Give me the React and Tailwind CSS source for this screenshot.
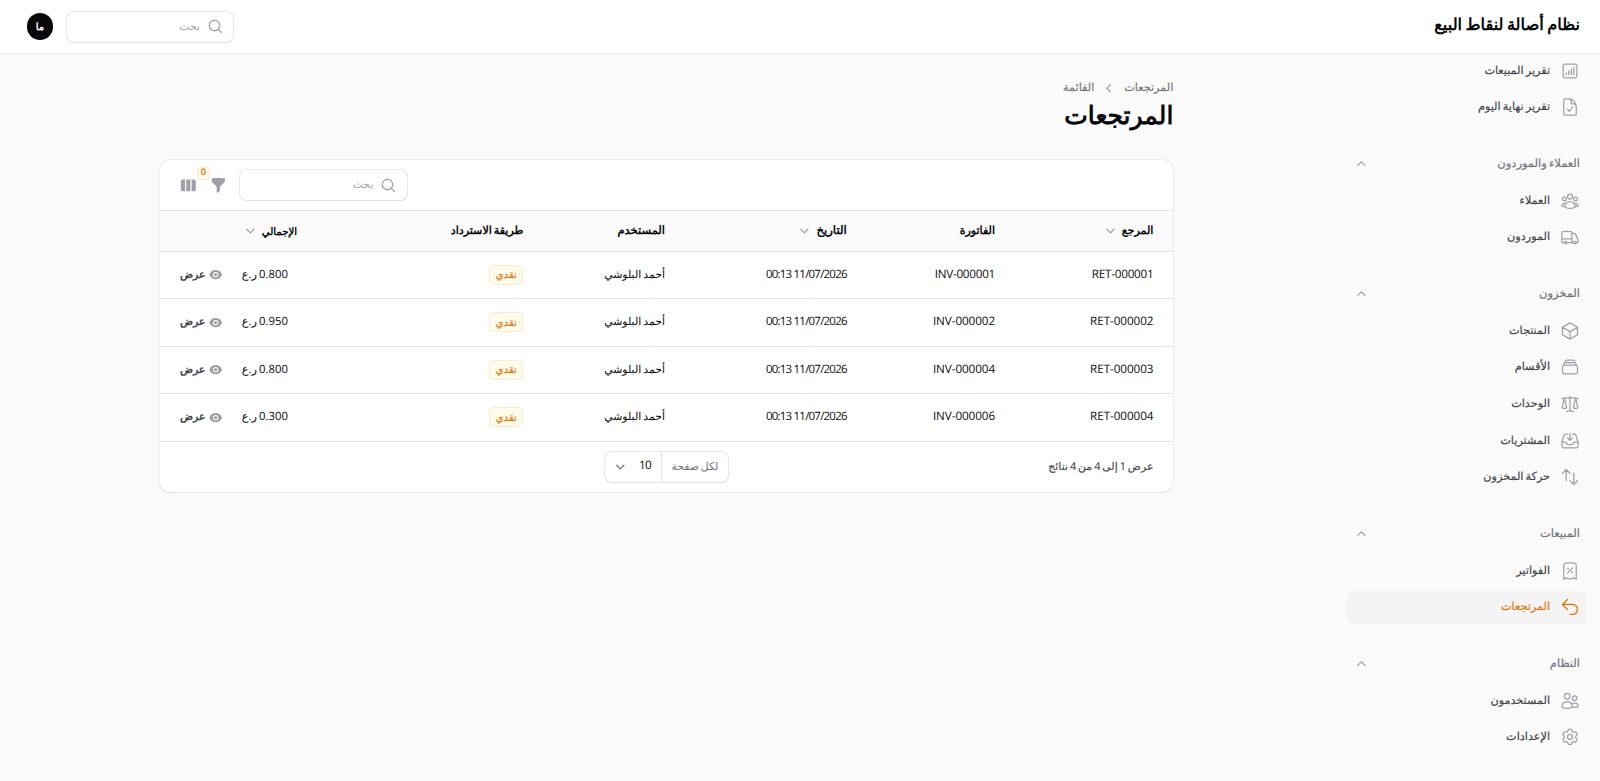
import {
  HiOutlineArrowsUpDown,
  HiOutlineArrowUturnLeft,
  HiOutlineChartBarSquare,
  HiOutlineCog6Tooth,
  HiOutlineCube,
  HiOutlineDocumentCheck,
  HiOutlineInboxArrowDown,
  HiOutlineReceiptPercent,
  HiOutlineRectangleStack,
  HiOutlineScale,
  HiOutlineTruck,
  HiOutlineUserGroup,
  HiOutlineUsers,
  HiMiniChevronDown,
  HiMiniChevronLeft,
  HiMiniChevronUp,
  HiMiniEye,
  HiMiniFunnel,
  HiMiniMagnifyingGlass,
  HiMiniViewColumns,
} from 'react-icons/hi2';

const navigation = [
  {
    items: [
      { label: 'تقرير المبيعات', icon: HiOutlineChartBarSquare },
      { label: 'تقرير نهاية اليوم', icon: HiOutlineDocumentCheck },
    ],
  },
  {
    label: 'العملاء والموردون',
    items: [
      { label: 'العملاء', icon: HiOutlineUserGroup },
      { label: 'الموردون', icon: HiOutlineTruck },
    ],
  },
  {
    label: 'المخزون',
    items: [
      { label: 'المنتجات', icon: HiOutlineCube },
      { label: 'الأقسام', icon: HiOutlineRectangleStack },
      { label: 'الوحدات', icon: HiOutlineScale },
      { label: 'المشتريات', icon: HiOutlineInboxArrowDown },
      { label: 'حركة المخزون', icon: HiOutlineArrowsUpDown },
    ],
  },
  {
    label: 'المبيعات',
    items: [
      { label: 'الفواتير', icon: HiOutlineReceiptPercent },
      { label: 'المرتجعات', icon: HiOutlineArrowUturnLeft, active: true },
    ],
  },
  {
    label: 'النظام',
    items: [
      { label: 'المستخدمون', icon: HiOutlineUsers },
      { label: 'الإعدادات', icon: HiOutlineCog6Tooth },
    ],
  },
];

const columns = [
  { label: 'المرجع', width: 'w-[202px]', text: 'text-[13.3px]', sortable: true },
  { label: 'الفاتورة', width: 'w-[178px]', text: 'text-[13.3px]' },
  { label: 'التاريخ', width: 'w-[218px]', text: 'text-sm', sortable: true },
  { label: 'المستخدم', width: 'w-[170px]', text: 'text-[13.8px]' },
  { label: 'طريقة الاسترداد', width: 'w-[272px]', text: 'text-[13.3px]' },
  { label: 'الإجمالي', width: 'w-[90px]', text: 'text-[12.2px]', sortable: true, end: true },
];

const rows = [
  { ref: 'RET-000001', invoice: 'INV-000001', total: '0.800', tracking: 'tracking-[-0.02em]' },
  { ref: 'RET-000002', invoice: 'INV-000002', total: '0.950', tracking: 'tracking-[-0.005em]' },
  { ref: 'RET-000003', invoice: 'INV-000004', total: '0.800', tracking: 'tracking-[-0.005em]' },
  { ref: 'RET-000004', invoice: 'INV-000006', total: '0.300', tracking: 'tracking-[-0.005em]' },
];

const SearchField = () => (
  <div className="flex h-9 w-[200px] items-center gap-2 rounded-lg bg-white px-3 shadow-xs ring-1 ring-zinc-950/10">
    <HiMiniMagnifyingGlass className="size-5 shrink-0 text-zinc-400" />
    <span className="text-[13px] leading-6 text-zinc-400">بحث</span>
  </div>
);

const Topbar = () => (
  <header className="relative z-10 flex h-16 shrink-0 items-center justify-between bg-white px-6 pl-8 shadow-xs ring-1 ring-zinc-950/5">
    <span className="pb-1.5 text-[19.5px] leading-5 font-bold text-zinc-950">نظام أصالة لنقاط البيع</span>
    <div className="flex items-center gap-4">
      <SearchField />
      <div className="flex size-8 items-center justify-center rounded-full bg-zinc-950 text-xs font-semibold text-white">ما</div>
    </div>
  </header>
);

const NavItem = ({ item }) => {
  const Icon = item.icon;
  return (
    <li>
      <a className={`flex h-10 items-center gap-3 rounded-lg px-2 ${item.active ? 'bg-zinc-100 text-amber-600' : 'text-zinc-700'}`}>
        <Icon className={`size-6 shrink-0 ${item.active ? 'text-amber-600' : 'text-zinc-400'}`} />
        <span className="text-[13.5px] leading-6 font-medium [-webkit-text-stroke:0.2px]">{item.label}</span>
      </a>
    </li>
  );
};

const Sidebar = () => (
  <nav className="flex w-80 shrink-0 flex-col gap-7 px-4 pt-px">
    {navigation.map((group, i) => (
      <div key={i} className="flex flex-col gap-1">
        {group.label && (
          <div className="flex h-10 items-center justify-between px-2">
            <span className="text-[13.8px] leading-6 font-medium text-zinc-500 [-webkit-text-stroke:0.2px]">{group.label}</span>
            <HiMiniChevronUp className="size-5 text-zinc-400" />
          </div>
        )}
        <ul className="flex flex-col gap-1">
          {group.items.map((item) => (
            <NavItem key={item.label} item={item} />
          ))}
        </ul>
      </div>
    ))}
  </nav>
);

const Toolbar = () => (
  <div className="flex items-center justify-end gap-4 px-6 py-3">
    <SearchField />
    <div className="relative">
      <HiMiniFunnel className="size-5 text-zinc-400" />
      <span className="absolute -top-3 left-full -ml-9 flex size-4 items-center justify-center rounded bg-amber-50 pb-1 text-[11px] leading-none font-semibold text-amber-600 ring-1 ring-amber-600/15 ring-inset">
        0
      </span>
    </div>
    <HiMiniViewColumns className="size-5 text-zinc-400" />
  </div>
);

const ReturnsTable = () => (
  <table className="w-full table-fixed">
    <thead>
      <tr className="h-[49px] border-y border-zinc-200 bg-zinc-50">
        {columns.map((col, i) => (
          <th key={col.label} className={`${col.width} px-3 ${i === 0 ? 'pr-6' : ''}`}>
            <span className={`flex items-center gap-1 whitespace-nowrap ${col.end ? 'justify-end' : ''}`}>
              <span className={`${col.text} leading-6 font-semibold text-zinc-950`}>{col.label}</span>
              {col.sortable && <HiMiniChevronDown className="size-5 shrink-0 text-zinc-400" />}
            </span>
          </th>
        ))}
        <th className="w-[86px]" />
      </tr>
    </thead>
    <tbody className="text-sm leading-6 text-zinc-950">
      {rows.map((row) => (
        <tr key={row.ref} className="h-[57px] border-b border-zinc-200">
          <td className={`px-3 pr-6 ${row.tracking}`}>{row.ref}</td>
          <td className={`px-3 ${row.tracking}`}>{row.invoice}</td>
          <td className="px-3 text-[13.8px] tracking-[-0.068em] whitespace-nowrap [word-spacing:0]">11/07/2026 00:13</td>
          <td className="px-3 text-[13.1px]">أحمد البلوشي</td>
          <td className="px-3">
            <span className="flex w-fit items-center rounded-md bg-amber-50 px-2 py-1 text-xs font-medium text-amber-600 ring-1 ring-amber-600/15 ring-inset [-webkit-text-stroke:0.2px]">
              نقدي
            </span>
          </td>
          <td className="px-3 text-left text-[13.6px] tracking-[-0.04em] whitespace-nowrap">{row.total} ر.ع</td>
          <td className="pl-6">
            <a className="flex items-center justify-end gap-1 text-[13px] font-semibold text-zinc-700">
              <HiMiniEye className="size-4 text-zinc-400" />
              <span>عرض</span>
            </a>
          </td>
        </tr>
      ))}
    </tbody>
  </table>
);

const Pagination = () => (
  <div className="grid grid-cols-[1fr_auto_1fr] items-center px-6 py-3">
    <span className="text-[13px] font-medium text-zinc-700 [-webkit-text-stroke:0.15px]">عرض 1 إلى 4 من 4 نتائج</span>
    <div className="flex h-9 items-stretch rounded-lg bg-white text-sm shadow-xs ring-1 ring-zinc-950/10">
      <span className="flex w-[81px] items-center border-l border-zinc-200 pr-3 text-[13px] text-zinc-500">لكل صفحة</span>
      <span className="flex w-[67px] items-center justify-between pr-3 pl-2 text-zinc-950">
        <span className="tracking-[-0.06em]">10</span>
        <HiMiniChevronDown className="size-5 text-zinc-500" />
      </span>
    </div>
  </div>
);

const App = () => (
  <div
    dir="rtl"
    className="flex h-[937px] flex-col overflow-hidden bg-zinc-50 font-['Open_Sans','Noto_Sans',sans-serif] text-zinc-950 antialiased [text-rendering:geometricPrecision] [word-spacing:-1px] [zoom:0.83333]"
  >
    <Topbar />
    <div className="flex flex-1">
      <Sidebar />
      <main className="mx-auto flex w-full max-w-7xl flex-col gap-8 p-8">
        <div>
          <div className="mb-1 flex h-5 items-center gap-2 text-[13.5px] font-medium text-zinc-500 [-webkit-text-stroke:0.15px]">
            <span>المرتجعات</span>
            <HiMiniChevronLeft className="size-5 text-zinc-400" />
            <span>القائمة</span>
          </div>
          <h1 className="pb-1 text-[30px] leading-9 font-bold">المرتجعات</h1>
        </div>
        <section className="overflow-hidden rounded-xl bg-white shadow-xs ring-1 ring-zinc-950/5">
          <Toolbar />
          <ReturnsTable />
          <Pagination />
        </section>
      </main>
    </div>
  </div>
);

export default App;
